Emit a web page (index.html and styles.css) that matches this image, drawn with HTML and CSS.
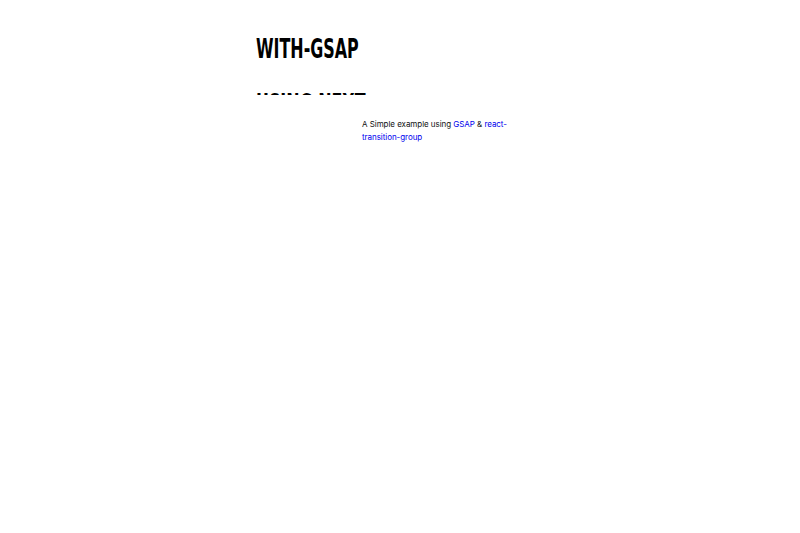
FILE: index.html
```html
<!DOCTYPE html>
<html>
<head>
<meta charset="utf-8">
<link rel="stylesheet" href="styles.css">
</head>
<body>
<main class="page">
  <div class="content">
    <div class="line"><h1 class="title">WITH-GSAP</h1></div>
    <div class="line line-clip"><h1 class="title title-moving">USING NEXT</h1></div>
    <p class="intro">A Simple example using <a href="#">GSAP</a> &amp; <a href="#">react-transition-group</a></p>
  </div>
</main>
</body>
</html>
```
FILE: styles.css
```css
html, body { margin: 0; padding: 0; background: #fff; }
.page { width: 800px; height: 533px; }
.content { margin-left: 256px; padding-top: 30px; width: 288px; display: flex; flex-direction: column; }
.line { overflow: hidden; height: 38px; }
.line-clip { height: 27px; }
.title {
  margin: 0;
  font-family: "DejaVu Sans Condensed", "DejaVu Sans", sans-serif;
  font-stretch: condensed;
  font-weight: bold;
  font-size: 26px;
  line-height: 38px;
  color: #000;
  letter-spacing: 0;
  transform-origin: left top;
  transform: scaleX(0.68);
  white-space: nowrap;
}
.title-moving { transform: translateY(17px) scaleX(0.68); }
.intro {
  margin: 23px 0 0 106px;
  width: 148px;
  font-family: "Inter", sans-serif;
  font-size: 8px;
  letter-spacing: -0.05px;
  line-height: 13px;
  color: #111;
}
.intro a { color: #0000ee; text-decoration: none; }
```
